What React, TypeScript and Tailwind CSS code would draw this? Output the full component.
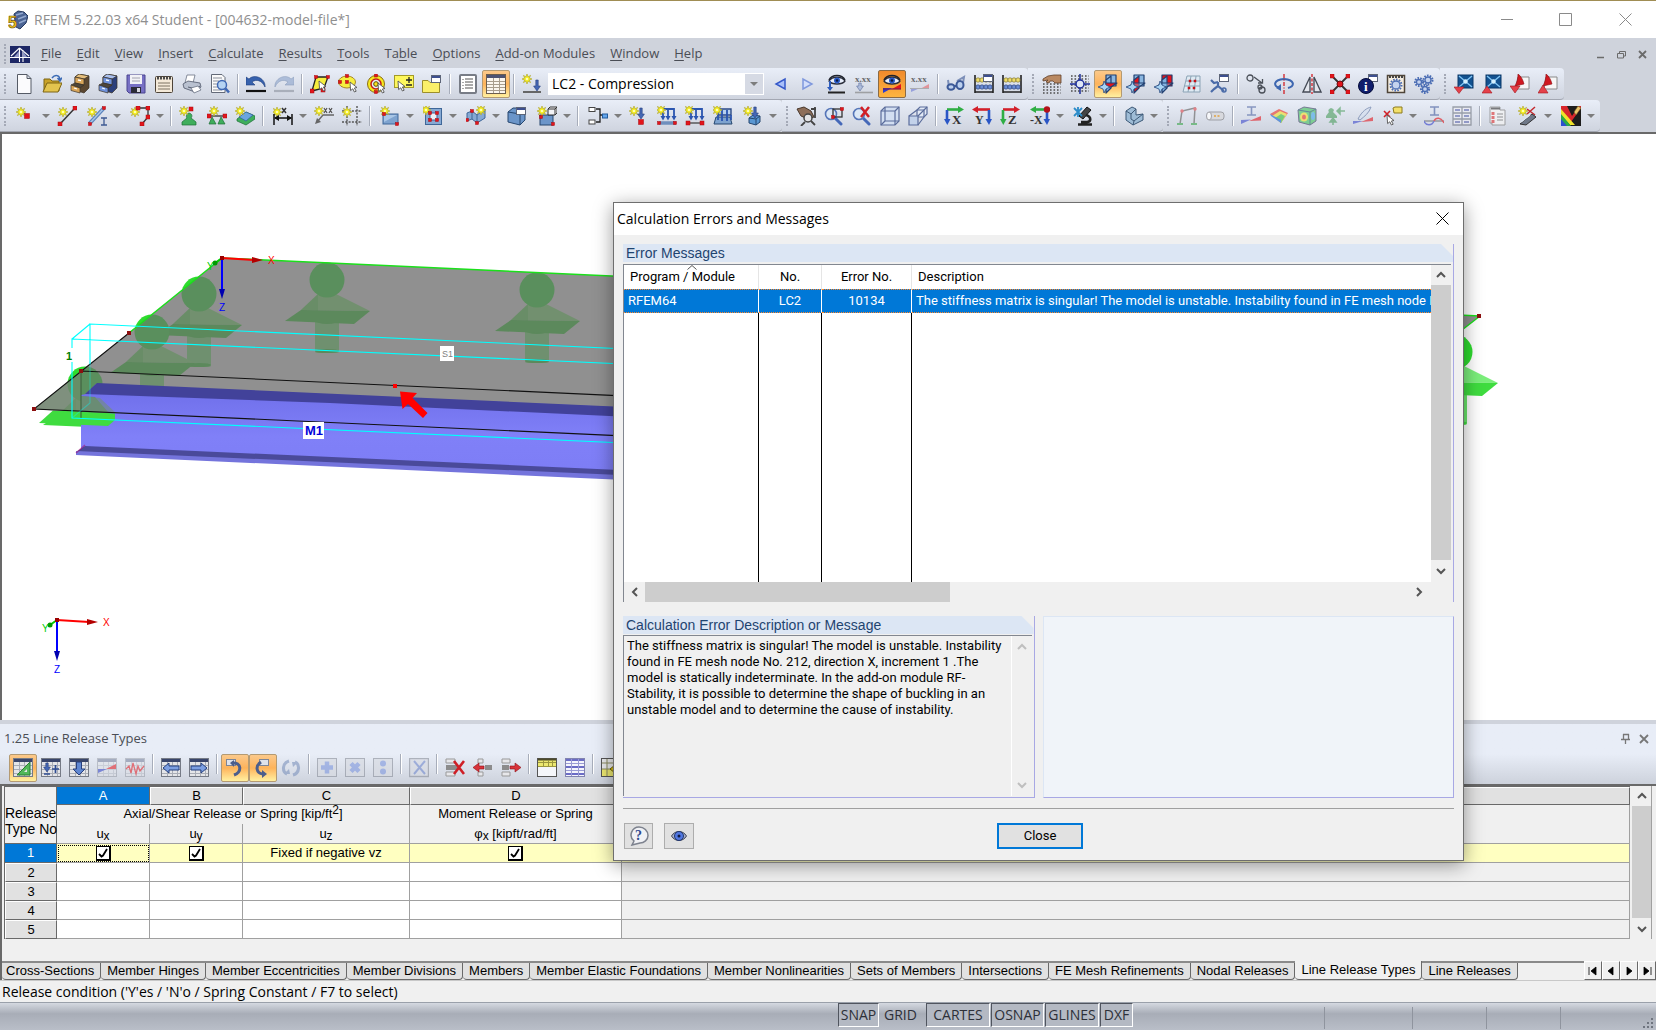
import React from "react";

type Kids = { children?: React.ReactNode };
type Pt = { x?: number; y?: number };

/* ---------- icon parts ---------- */

const Ico = ({ children, size = 20 }: Kids & { size?: number }) => (
  <svg width={size} height={size} viewBox="0 0 20 20" fill="none" aria-hidden="true" className="block shrink-0">
    {children}
  </svg>
);

const Star = ({ x = 5, y = 5 }: Pt) => (
  <g transform={`translate(${x} ${y})`}>
    <path
      d="M0-5 1.1-2.2 3.6-3.6 2.3-1 5 0 2.3 1 3.6 3.6 1.1 2.2 0 5-1.1 2.2-3.6 3.6-2.3 1-5 0-2.3-1-3.6-3.6-1.1-2.2Z"
      fill="#f4ec1c"
      stroke="#b3ab3a"
      strokeWidth=".7"
    />
    <circle r="1.3" fill="#ffffb0" />
  </g>
);
const Dot = ({ x = 0, y = 0, s = 4 }: Pt & { s?: number }) => (
  <rect x={x - s / 2} y={y - s / 2} width={s} height={s} fill="#e3141b" stroke="#a50d12" strokeWidth=".5" />
);
const Cursor = ({ x = 0, y = 0 }: Pt) => (
  <path transform={`translate(${x} ${y})`} d="M0 0 7 5.5 4.4 6 6.2 9.2 4.4 10 2.8 6.8 .6 8.6Z" fill="#fff" stroke="#555" strokeWidth=".9" />
);
const Win = ({ x = 0, y = 0 }: Pt) => (
  <g transform={`translate(${x} ${y})`}>
    <rect x=".5" y=".5" width="9" height="7" fill="#fff" stroke="#5d6578" />
    <rect x="1" y="1" width="8" height="2" fill="#3d4f8f" />
  </g>
);
const DownArrow = ({ x = 0, y = 0, h = 12, c = "#4467b5" }: Pt & { h?: number; c?: string }) => (
  <path transform={`translate(${x} ${y})`} d={`M-1.2 0H1.2V${h - 5}H3.4L0 ${h}-3.4 ${h - 5}H-1.2Z`} fill={c} stroke="#28407e" strokeWidth=".6" />
);
const Grid = ({ faded = false }: { faded?: boolean }) => (
  <g opacity={faded ? 0.55 : 1}>
    <rect x=".5" y=".5" width="19" height="18" fill="#e4e5e8" stroke="#767b86" />
    <path d="M1 7.500H19M1 11.500H19M1 15.500H19M6.500 4V18M11.500 4V18M16.500 4V18" stroke="#a9adb6" />
    <rect x="1" y="1" width="18" height="3" fill="#39456b" />
  </g>
);
const Lens = ({ x = 8, y = 8 }: Pt) => (
  <g transform={`translate(${x} ${y})`}>
    <path d="M4 4 10 10" stroke="#4568b8" strokeWidth="3" strokeLinecap="round" />
    <circle r="5.500" fill="#dbe8f8" fillOpacity=".8" stroke="#5575b8" strokeWidth="1.600" />
  </g>
);
const Eye = ({ x = 10, y = 7 }: Pt) => (
  <g transform={`translate(${x} ${y})`}>
    <path d="M-8 1C-5-4 5-4 8 1 5 5-5 5-8 1Z" fill="#e7eefc" stroke="#2b2f3c" strokeWidth="1.300" />
    <path d="M-8 0C-5-6 5-6 8 0" stroke="#1e222c" strokeWidth="1.500" />
    <circle cy=".5" r="3" fill="#2a5cc9" />
    <circle cy=".5" r="1.300" fill="#0b1a40" />
  </g>
);
const Glyph = ({ x, y, s = 10, c = "#333", b = true, children }: Kids & { x: number; y: number; s?: number; c?: string; b?: boolean }) => (
  <text x={x} y={y} fontSize={s} fill={c} fontWeight={b ? 700 : 400} fontFamily='"Liberation Serif", serif'>
    {children}
  </text>
);
const Gear = ({ x, y, r, c = "#4a6cb3" }: { x: number; y: number; r: number; c?: string }) => (
  <g>
    <circle cx={x} cy={y} r={r} stroke={c} strokeWidth="2" strokeDasharray="1.600 1.200" />
    <circle cx={x} cy={y} r={r - 1.500} fill="#c5d3ee" stroke={c} strokeWidth="1.300" />
  </g>
);
const Block = ({ x = 2, y = 8 }: Pt) => (
  <g transform={`translate(${x} ${y})`}>
    <rect width="15" height="10" fill="#7ea3cf" stroke="#3f6798" />
    <path d="M1 1H14L1 8Z" fill="#a9c6e6" />
  </g>
);
const Abacus = () => (
  <g>
    <path d="M1 1V19M19 1V19M1 18H19" stroke="#222" strokeWidth="1.600" />
    <path d="M1 6H19M1 13H19" stroke="#555" />
    {[4, 8, 12, 16].map((v) => (
      <circle key={v} cx={v} cy="6" r="2.200" fill="#eedc6a" stroke="#6e6424" strokeWidth=".6" />
    ))}
    {[4, 8, 12, 16].map((v) => (
      <circle key={v} cx={v} cy="13" r="2.200" fill="#6a8cd4" stroke="#22386e" strokeWidth=".6" />
    ))}
  </g>
);
const DotGrid = ({ rows = [2, 5, 8, 11, 14, 17] }: { rows?: number[] }) => (
  <g stroke="#4e4e4e" strokeWidth="1.600" strokeDasharray="1.600 1.900">
    {rows.map((v) => (
      <path key={v} d={`M1 ${v}H19`} />
    ))}
  </g>
);
const Planes = ({ kind }: { kind: "flat" | "tall" | "face" }) => (
  <g strokeWidth="1.200" strokeLinejoin="round">
    <path d="M8 1H18V12H8Z" fill={kind === "face" ? "#e3141b" : "#8ab6e0"} stroke="#1f3f70" />
    <path d="M8 6 13 2V14L8 19Z" fill={kind === "tall" ? "#e3141b" : "#7fb0df"} stroke="#223f70" />
    <path d="M2 13 8 9H19L13 13Z" fill={kind === "flat" ? "#e3141b" : "#8fc0ea"} fillOpacity={kind === "flat" ? 1 : 0.4} stroke="#223f70" />
    <path d="M0 13 5 11 6 7 8 11 12 13 8 15 6 19 5 15Z" fill="#a8d4f4" stroke="#284a80" strokeWidth=".8" />
  </g>
);
const Loads = () => (
  <g>
    <path d="M6 12V3H11V12M11 3H17V12" stroke="#2b55b0" strokeWidth="1.800" />
    <path d="M3.500 10H8.500L6 14.500ZM8.500 10H13.500L11 14.500ZM14.500 10H19.500L17 14.500Z" fill="#2b55b0" />
  </g>
);
const Axes = ({ h, v, left, t }: { h: string; v: string; left?: boolean; t: string }) => (
  <g>
    {left ? (
      <>
        <path d="M18 3.500H5" stroke={h} strokeWidth="2.600" />
        <path d="M6 0V7L0 3.500Z" fill={h} />
        <path d="M17 4V14" stroke={v} strokeWidth="2.600" />
        <path d="M13.500 13H20L17 19Z" fill={v} />
        <Glyph x={t.length > 1 ? 0 : 3} y={18} s={12}>{t}</Glyph>
      </>
    ) : (
      <>
        <path d="M3 3.500H14" stroke={h} strokeWidth="2.600" />
        <path d="M14 0V7L20 3.500Z" fill={h} />
        <path d="M3 4V14" stroke={v} strokeWidth="2.600" />
        <path d="M0 13H6.500L3.300 19Z" fill={v} />
        <Glyph x={8} y={18} s={13}>{t}</Glyph>
      </>
    )}
  </g>
);
const Prism = ({ up }: { up?: boolean }) => (
  <g>
    <rect x="4" y="1" width="15" height="13" fill="#12518f" stroke="#0b3868" />
    <path d="M11.500 7.500 5 2M11.500 7.500 18 2M11.500 7.500 5 13M11.500 7.500 18 13" stroke="#7fc4f4" strokeWidth="1.400" />
    <circle cx="11.500" cy="7.500" r="2.200" fill="#d4f0ff" />
    <path d={up ? "M0 19H10L5 12Z" : "M0 13H10L5 19.500Z"} fill="#e4414a" stroke="#a4151d" strokeWidth=".6" />
  </g>
);
const Pdf = ({ up }: { up?: boolean }) => (
  <g>
    <path d="M8 3H19V15H6Z" fill="#f6f6f6" stroke="#8a8a8a" />
    <path d="M8 0C11 2 13 6 14 10L5 12C7 8 8 4 8 0Z" fill="#d01820" stroke="#8b0d13" strokeWidth=".6" />
    <path d={up ? "M0 19H10L5 11Z" : "M0 12H10L5 19Z"} fill="#e4414a" stroke="#a4151d" strokeWidth=".6" />
  </g>
);
const Drawer = ({ a, b, c }: { a: string; b: string; c: string }) => (
  <g stroke="#3b3226" strokeWidth=".7" strokeLinejoin="round">
    <path d="M5 3 9 0 19 2V14L14 19 5 16Z" fill={c} />
    <path d="M5 3 14 5 19 2 9 0Z" fill={a} />
    <path d="M5 3 14 5V11L5 9Z" fill={b} />
    <path d="M1 11 5 9 14 11 10 14Z" fill="#4e463a" />
    <path d="M1 11 10 14V19L1 16.500Z" fill={b} />
    <path d="M4 14 7 15M8 6 11 6.700" stroke="#fff" strokeWidth="1.300" />
  </g>
);

/* ---------- icon set ---------- */

const icons: Record<string, React.ReactNode> = {
  new: <path d="M3.500.5H13L17 4.500V19.500H3.500ZM13 .5V4.500H17" fill="#fbfbfd" stroke="#555b66" />,
  open: (
    <g>
      <path d="M2 5H8L10 7H17V17H2Z" fill="#c9a227" stroke="#7d6415" />
      <path d="M1 18 5 9H20L16 18Z" fill="#e3c44e" stroke="#7d6415" />
      <path d="M10 4C13 0 18 1 18 6M15.500 4 18 7 20 3.500" stroke="#3b6bb5" strokeWidth="1.500" />
    </g>
  ),
  drawerTan: <Drawer a="#e5bf7e" b="#d8a55a" c="#5a4630" />,
  drawerBlue: <Drawer a="#a9c0ef" b="#6f92dc" c="#2a3f7c" />,
  save: (
    <g>
      <path d="M1 1H19V19H3L1 17Z" fill="#7770c4" stroke="#4b458f" />
      <rect x="4" y="1" width="12" height="9" fill="#f1f1f6" />
      <path d="M6 4H14M6 7H14" stroke="#a2a2b0" />
      <rect x="5" y="13" width="10" height="6" fill="#2b2b38" />
      <rect x="11" y="14" width="3" height="4" fill="#d8d8e0" />
    </g>
  ),
  notes: (
    <g>
      <rect x="1.500" y="2.500" width="17" height="16" rx="1" fill="#f4e9d8" stroke="#4e4438" />
      <path d="M3 4H17" stroke="#4a4a4a" strokeWidth="3" strokeDasharray="2 1" />
      <path d="M4 9H16M4 12H16M4 15H16" stroke="#7d7263" />
    </g>
  ),
  print: (
    <g strokeWidth=".8">
      <path d="M3 9 5 1H13L11 9Z" fill="#fff" stroke="#6a7284" />
      <path d="M1 10 6 7 18 9 19 13 13 18 2 14Z" fill="#b9c1d0" stroke="#4f5769" />
      <path d="M6 13 14 15 18 12" stroke="#3f4657" />
      <path d="M9 14 16 12 19 16 12 19Z" fill="#fff" stroke="#6a7284" />
    </g>
  ),
  preview: (
    <g>
      <path d="M1.500.5H12L15 3.500V18.500H1.500Z" fill="#fafafa" stroke="#636a78" />
      <path d="M3 4H12M3 7H9M3 10H8M3 13H8M3 16H12" stroke="#8a8f9b" />
      <circle cx="12" cy="11" r="4.500" fill="#b6d4f3" stroke="#3f68b4" strokeWidth="1.500" />
      <path d="M15.500 14.500 19 18.500" stroke="#3f68b4" strokeWidth="2.500" />
    </g>
  ),
  undo: (
    <g>
      <path d="M0 3V11H9L6 8C10 5 16 6 19 13 20 5 9-1 3 5Z" fill="#3661ad" stroke="#1e3e7c" strokeWidth=".6" />
      <path d="M0 17H20" stroke="#111" strokeWidth="2.200" />
    </g>
  ),
  redo: (
    <g opacity=".6">
      <path d="M20 3V11H11L14 8C10 5 4 6 1 13 0 5 11-1 17 5Z" fill="#8ba3cb" stroke="#5c759f" strokeWidth=".6" />
      <path d="M0 17H20" stroke="#8c929e" strokeWidth="2.200" />
    </g>
  ),
  selPoly: (
    <g>
      <path d="M2 17 6 3H18L14 14Z" fill="#f6ef3e" stroke="#222" strokeWidth="1.300" />
      <Dot x={2} y={17} /><Dot x={6} y={3} s={3} /><Dot x={18} y={3} s={3} /><Dot x={13} y={16} />
      <Cursor x={9} y={7} />
    </g>
  ),
  selEllipse: (
    <g>
      <ellipse cx="9" cy="8" rx="8.500" ry="6" fill="#f6ef3e" stroke="#a8862a" />
      <Dot x={9} y={8} s={3} /><Dot x={2} y={8} s={3} /><Dot x={9} y={2} s={3} />
      <Cursor x={12} y={8} />
    </g>
  ),
  selRing: (
    <g>
      <circle cx="10" cy="10" r="8.500" fill="#f6e81e" stroke="#8a6d15" />
      <circle cx="10" cy="10" r="5" fill="#e9edf5" stroke="#c51a1a" strokeWidth="1.500" />
      <circle cx="10" cy="10" r="2.300" fill="#f6e81e" stroke="#5a4a10" />
      <Dot x={10} y={1.500} s={3} /><Dot x={10} y={18} s={3} />
      <Cursor x={12} y={9} />
    </g>
  ),
  selPlus: (
    <g>
      <rect x=".5" y="1.500" width="19" height="12" fill="#fdf75c" stroke="#a39a28" />
      <path d="M12 6H18M15 3V9M12 11H18" stroke="#222" strokeWidth="1.300" />
      <Cursor x={4} y={7} />
    </g>
  ),
  folderWin: (
    <g>
      <path d="M.5 6.500H6L8 8.500H17.500V18.500H.5Z" fill="#fbf06a" stroke="#9c8f2b" />
      <Win x={9} y={1} />
    </g>
  ),
  list: (
    <g>
      <rect x="2" y="1" width="16" height="18" rx="1" fill="#fff" stroke="#777c86" strokeWidth="2" />
      <path d="M7 5H15M7 8H15M7 11H15M7 14H15" stroke="#555" />
      <path d="M5 5V15" stroke="#555" strokeDasharray="1 2" />
    </g>
  ),
  table: (
    <g>
      <rect x=".5" y=".5" width="19" height="19" fill="#fbf6ee" stroke="#6b5d4d" />
      <rect x="1" y="1" width="18" height="3" fill="#4d5373" />
      <path d="M1 7.500H19M1 10.500H19M1 13.500H19M1 16.500H19M7.500 4V19M13.500 4V19" stroke="#a89d8d" />
    </g>
  ),
  loadNew: (
    <g>
      <Star x={5} y={5} />
      <DownArrow x={15} y={6} h={11} />
      <path d="M1 18H19" stroke="#666" strokeWidth="2" />
    </g>
  ),
  left: <path d="M15 5V15L6 10Z" fill="#a9c0fa" stroke="#3558c9" strokeWidth="1.500" />,
  right: <path d="M5 5V15L14 10Z" fill="#d3defa" stroke="#7f98dd" strokeWidth="1.500" />,
  eyeLoad: (
    <g>
      <Eye x={11} y={6} />
      <path d="M4 7V16" stroke="#2f5dbd" strokeWidth="2" />
      <path d="M1 13H7L4 17Z" fill="#2f5dbd" />
      <path d="M2 18.500H19" stroke="#222" strokeWidth="2" />
    </g>
  ),
  xxLoad: (
    <g opacity=".7">
      <Glyph x={1} y={8} s={9}>x.xx</Glyph>
      <DownArrow x={6} y={9} h={8} c="#9db0d8" />
      <path d="M1 18.500H19" stroke="#888" strokeWidth="1.600" />
    </g>
  ),
  eyeRes: (
    <g>
      <Eye x={10} y={6} />
      <path d="M1 14H10L1 19Z" fill="#2a3fd0" />
      <path d="M19 10V15H10Z" fill="#e3141b" />
      <path d="M1 15H19" stroke="#7a1b4e" strokeWidth="1.200" />
    </g>
  ),
  xxRes: (
    <g opacity=".7">
      <Glyph x={1} y={8} s={9}>x.xx</Glyph>
      <path d="M1 14H10L1 18Z" fill="#7d88d8" />
      <path d="M19 10V15H10Z" fill="#e4777b" />
      <path d="M0 14.500H19" stroke="#999" />
    </g>
  ),
  glasses: (
    <g stroke="#3d5a98" strokeWidth="2">
      <path d="M2 6 3 13M11 7 18 3 17 9" stroke="#7c8fb8" />
      <ellipse cx="5" cy="13" rx="3.500" ry="2.800" fill="#bcd0ee" />
      <ellipse cx="14" cy="11" rx="3.500" ry="4" fill="#bcd0ee" />
      <path d="M8 12H11" />
    </g>
  ),
  abacusWin: <g><Abacus /><Win x={9} y={0} /></g>,
  abacus: <Abacus />,
  handGrid: (
    <g>
      <DotGrid rows={[10, 13, 16, 19]} />
      <path d="M1 5 6 2 12 1 19 1V9H13L11 7 8 7 7 9 4 8 6 6 1 7Z" fill="#b98963" stroke="#5f3f28" strokeWidth=".8" />
    </g>
  ),
  gridCenter: (
    <g>
      <DotGrid />
      <circle cx="10" cy="10" r="4" fill="#dfe7f6" stroke="#1e2f9a" strokeWidth="1.500" />
      <path d="M10 0V6M10 14V20M0 10H6M14 10H20" stroke="#1e2f9a" strokeWidth="1.500" />
    </g>
  ),
  plane1: <Planes kind="flat" />,
  plane2: <Planes kind="tall" />,
  plane3: <Planes kind="face" />,
  gridPlane: (
    <g>
      <path d="M5 2H18V18H1Z" fill="#dfeaf3" stroke="#8ba3b5" />
      <path d="M4 7H18M2 12H18M9 2 6 18M14 2 12 18" stroke="#8ba3b5" />
      <Dot x={8} y={7} s={2} /><Dot x={13} y={7} s={2} /><Dot x={7} y={14} s={2} /><Dot x={12} y={14} s={2} />
    </g>
  ),
  wrench: (
    <g>
      <path d="M1 6 4 9 8 8M8 8 8 12 14 17M8 12 4 15 1 18" stroke="#4a6ba8" strokeWidth="2.200" />
      <circle cx="14" cy="16" r="2" stroke="#4a6ba8" strokeWidth="1.500" />
      <Win x={9} y={0} />
    </g>
  ),
  copyO: (
    <g stroke="#4a4f58" strokeWidth="1.300">
      <circle cx="4" cy="4" r="3" /><circle cx="14" cy="13" r="2" /><circle cx="16" cy="16" r="3" />
      <path d="M8 3 16 9M12 9H16.500V5" />
    </g>
  ),
  rotate: (
    <g>
      <path d="M6 14C-1 12-1 6 10 5 21 6 21 12 14 14" stroke="#3d66b0" strokeWidth="2" />
      <path d="M7 10V17L2 14Z" fill="#3d66b0" />
      <path d="M10 0V20" stroke="#d21f26" strokeWidth="1.300" strokeDasharray="4 1.500 1 1.500" />
    </g>
  ),
  mirror: (
    <g>
      <path d="M8 3V18H1ZM12 3V18H19Z" fill="#e4e7ee" stroke="#444a55" strokeWidth="1.300" />
      <path d="M10 0V20" stroke="#d21f26" strokeWidth="1.300" strokeDasharray="3 1.500" />
    </g>
  ),
  explode: (
    <g>
      <path d="M2 2 18 18M18 2 2 18" stroke="#333" strokeWidth="1.800" />
      <Dot x={2} y={2} /><Dot x={18} y={2} /><Dot x={2} y={18} /><Dot x={18} y={18} />
      <circle cx="10" cy="10" r="3" fill="#e3141b" stroke="#6c0b0e" />
    </g>
  ),
  info: (
    <g>
      <Win x={10} y={0} />
      <circle cx="8" cy="12" r="7.500" fill="#101d6c" stroke="#050c38" />
      <Glyph x={6} y={17} s={13} c="#fff">i</Glyph>
    </g>
  ),
  gearDoc: (
    <g>
      <rect x="1.500" y="1.500" width="17" height="17" fill="#f4ecdf" stroke="#4e4438" strokeWidth="1.500" />
      <path d="M3 3H17" stroke="#444" strokeWidth="2" strokeDasharray="2 1" />
      <Gear x={10} y={11} r={5.500} />
    </g>
  ),
  gears: <g><Gear x={5} y={8} r={4} /><Gear x={14} y={6} r={4.500} /><Gear x={11} y={15} r={4} /></g>,
  img1: <Prism />,
  img2: <Prism up />,
  pdf1: <Pdf />,
  pdf2: <Pdf up />,

  node: <g><Star x={5} y={6} /><Dot x={11} y={10} s={5} /></g>,
  line: <g><path d="M3 18 18 2" stroke="#333" strokeWidth="1.500" /><Star x={6} y={6} /><Dot x={3} y={18} /><Dot x={18} y={2} /></g>,
  member: (
    <g>
      <path d="M3 17 17 2" stroke="#5b84bd" strokeWidth="4" /><path d="M3 17 17 2" stroke="#a7c5e8" strokeWidth="1.500" />
      <Star x={5} y={6} /><Dot x={3} y={18} s={3} /><Dot x={17} y={2} s={3} />
      <path d="M14 12H20M14 19H20M17 12V19" stroke="#3e5a93" strokeWidth="1.300" />
    </g>
  ),
  polyline: (
    <g>
      <path d="M6 2H18V11L12 18" stroke="#333" strokeWidth="1.300" />
      <Star x={5} y={6} /><Dot x={8} y={2} /><Dot x={18} y={2} /><Dot x={18} y={11} /><Dot x={12} y={18} />
    </g>
  ),
  support: (
    <g>
      <path d="M10 7C14 8 13 11 12 12L17 16V19H3V16L8 12C7 11 7 8 10 7Z" fill="#3fae5c" stroke="#1d6d35" strokeWidth=".7" />
      <Star x={5} y={5} /><Dot x={12} y={3} />
    </g>
  ),
  lineSup: (
    <g>
      <path d="M2 10H18" stroke="#333" strokeWidth="1.300" />
      <path d="M5 11 9 18H2ZM14 11 18 18H11Z" fill="#3fae5c" stroke="#1d6d35" strokeWidth=".7" />
      <Star x={7} y={5} /><Dot x={2} y={10} /><Dot x={18} y={10} />
    </g>
  ),
  surfSup: (
    <g>
      <path d="M2 13 11 6 20 10V13L11 19 2 15Z" fill="#3fae5c" stroke="#1d6d35" strokeWidth=".7" />
      <path d="M4 11 11 6 18 9 11 15Z" fill="#6aa5df" stroke="#2d5f97" strokeWidth=".7" /><Star x={5} y={5} />
    </g>
  ),
  dim: (
    <g>
      <Star x={4} y={6} /><path d="M9 2 13 7M13 2 9 7" stroke="#333" strokeWidth="1.500" />
      <path d="M1 8V19M19 8V19M2 12H18" stroke="#111" strokeWidth="1.500" /><path d="M6 9V15L1 12ZM14 9V15L19 12Z" fill="#111" />
    </g>
  ),
  xxNote: (
    <g><path d="M10 2 13 7M13 2 10 7M15 2 18 7M18 2 15 7" stroke="#555" strokeWidth="1.200" /><path d="M9 9H20M9 9 3 16" stroke="#666" strokeWidth="1.300" /><path d="M1 18 3 12 7 16Z" fill="#666" /><Star x={5} y={5} /></g>
  ),
  gridLines: (
    <g><path d="M5 0V20M15 0V20M0 5H20M0 16H20" stroke="#555" strokeWidth="1.400" strokeDasharray="2 1.300" /><Star x={5} y={6} /></g>
  ),
  rect: <g><Block x={3} y={8} /><Star x={5} y={5} /><Dot x={4} y={8} s={3} /><Dot x={17} y={18} s={3} /></g>,
  opening: (
    <g>
      <rect x="2.500" y="2.500" width="16" height="16" fill="#86a9d4" stroke="#3f6798" />
      <rect x="7" y="7" width="7" height="7" fill="#eef1f7" stroke="#3f6798" />
      <Star x={3} y={4} /><Dot x={7} y={7} s={3} /><Dot x={14} y={7} s={3} /><Dot x={7} y={14} s={3} /><Dot x={14} y={14} s={3} />
    </g>
  ),
  surfFold: (
    <g>
      <path d="M1 7 6 5 11 9 19 3V12L11 17 6 13 1 15Z" fill="#86a9d4" stroke="#3f6798" /><path d="M6 5V13M11 9V17" stroke="#3f6798" />
      <Star x={15} y={4} /><Dot x={1} y={14} s={3} /><Dot x={11} y={17} s={3} /><Dot x={6} y={5} s={3} />
    </g>
  ),
  solid: <g><path d="M1 6 6 2H18V14L13 19 1 16Z" fill="#6b95c9" stroke="#26476f" /><path d="M1 6 13 8V19M13 8 18 3" stroke="#26476f" /><Win x={9} y={1} /></g>,
  solidSet: (
    <g><rect x="3" y="9" width="13" height="10" fill="#6b95c9" stroke="#26476f" /><path d="M11 3 13 1H20V7L18 9H11ZM11 3H18V9M18 3 20 1" fill="#f4f4f7" stroke="#333" /><Star x={5} y={5} /><Dot x={4} y={11} s={3} /><Dot x={16} y={18} s={3} /></g>
  ),
  flow: (
    <g><path d="M8 3H12V16H8M12 9H15" stroke="#222" strokeWidth="1.300" /><rect x="1" y="1.500" width="6" height="4" fill="#fff" stroke="#444" /><rect x="1" y="14" width="6" height="4" fill="#fff" stroke="#444" /><rect x="14.500" y="8" width="5" height="4" fill="#64a5ea" stroke="#205a9c" /></g>
  ),
  loadNode: <g><Star x={5} y={5} /><DownArrow x={12} y={2} h={11} /><Dot x={12} y={16} s={5} /></g>,
  loadMem: <g><Loads /><Star x={4} y={4} /><path d="M2 17H19" stroke="#6f8fbd" strokeWidth="3.500" /><Dot x={2} y={17} s={3} /><Dot x={18} y={17} s={3} /></g>,
  loadLine: <g><Loads /><Star x={4} y={4} /><path d="M2 17H19" stroke="#444" strokeWidth="1.300" /><Dot x={3} y={17} /><Dot x={17} y={17} /></g>,
  loadSurf: <g><path d="M3 11H17L19 18H1Z" fill="#7ea3cf" stroke="#26476f" /><path d="M5 3H18V9H5Z" fill="#b8d0ee" stroke="#2b4a86" strokeWidth="1.400" /><path d="M5 9V14M9 4V15M14 4V15M18 9V14" stroke="#2b55b0" strokeWidth="1.800" /><Star x={4} y={4} /></g>,
  loadSolid: <g><path d="M6 12 10 9 17 10V16L13 19 6 17Z" fill="#5a97d2" stroke="#26476f" /><path d="M6 12 13 13V19M13 13 17 10" stroke="#26476f" /><Star x={5} y={5} /><DownArrow x={12} y={1} h={11} /></g>,
  handZoom: (
    <g><path d="M1 3 8 1 15 5 18 11 12 13 5 10Z" fill="#8d6e59" stroke="#49382c" /><circle cx="12" cy="12" r="4" fill="#e3e3e6" stroke="#444" strokeWidth="1.500" /><path d="M9 16 5 20M15 15 19 19M19 1V12M15 3H20" stroke="#444" strokeWidth="1.800" /></g>
  ),
  zoomWin: <g><Lens x={7} y={8} /><rect x="9" y="3" width="9" height="8" stroke="#333" strokeWidth="1.300" /><Dot x={9} y={11} s={3} /><Dot x={18} y={3} s={3} /></g>,
  zoomX: <g><Lens x={7} y={8} /><path d="M9 1 17 11M17 1 9 11" stroke="#d21f26" strokeWidth="2.500" /></g>,
  cube: <g stroke="#5a6c9b" strokeWidth="1.200"><path d="M1 5 5 1H19V15L15 19H1Z" fill="#d2def1" /><path d="M1 5H15V19M15 5 19 1M5 1V15H19M5 15 1 19" /></g>,
  cubes: <g stroke="#5a6c9b" strokeWidth="1.200"><path d="M9 4 12 1H19V8L16 11H9Z" fill="#e3eaf6" /><path d="M9 4H16V11M16 4 19 1" /><path d="M1 10H10V19H1Z" fill="#c3d2ea" /><path d="M1 10 9 4M10 10 16 4M10 19 16 11" /></g>,
  axX: <Axes h="#2fae44" v="#2a56c6" t="X" />,
  axY: <Axes h="#d3202a" v="#2a56c6" left t="Y" />,
  axZ: <Axes h="#d3202a" v="#2fae44" t="Z" />,
  axNX: <g><Axes h="#2fae44" v="#2a56c6" left t="-X" /><circle cx="17" cy="3.500" r="3.200" fill="#b3121a" /></g>,
  scope: <g><path d="M6 10 14 1 18 4 10 13Z" fill="#444" stroke="#111" /><path d="M13 9C19 11 18 16 14 16H8M5 18.500H19" stroke="#222" strokeWidth="2.600" /><path d="M1 2 9 10M9 2 1 10M5 1V11" stroke="#2c8cc9" strokeWidth="1.800" /></g>,
  solidView: <g strokeLinejoin="round" stroke="#3c5876"><path d="M2 5 8 1 12 3V9L19 8V14L9 19 2 14Z" fill="#9ebcd6" /><path d="M2 5 7 8V13L10 15 19 8M10 15 9 19M7 8 12 3" /></g>,
  frame: <g opacity=".75"><path d="M3 18 5 5 18 2 17 18" stroke="#777" strokeWidth="1.500" /><path d="M0 18H6M14 18H20" stroke="#58b068" strokeWidth="2" /><circle cx="5" cy="5" r="1.700" fill="#e16066" /><circle cx="18" cy="3" r="1.700" fill="#e16066" /></g>,
  pipe: <g opacity=".75"><rect x="2" y="6" width="17" height="8" rx="3" fill="#d7d7da" stroke="#8b8b90" /><ellipse cx="4" cy="10" rx="2.500" ry="4" fill="#fff" stroke="#8b8b90" /><path d="M9 10H16" stroke="#e1a03d" strokeWidth="2" strokeDasharray="2 1.500" /></g>,
  memRes: <g opacity=".7"><path d="M6 1H15M6 9H15M10.500 1V9" stroke="#6276ad" strokeWidth="1.600" /><path d="M0 18V14L10 13.500Z" fill="#5560d0" /><path d="M20 10V14.500L8 15Z" fill="#e2343b" /></g>,
  surfRes: <g opacity=".75"><path d="M1 8 10 3 19 7 12 17Z" fill="#e9534a" /><path d="M3 10 11 5 18 8 12 17Z" fill="#f1e04b" /><path d="M6 12 12 8 16 10 12 17Z" fill="#58c75c" /><path d="M1 8 2 10 12 17 12 14Z" fill="#3a7ae0" /></g>,
  solidRes: <g opacity=".75"><path d="M1 4 7 1 19 3V15L13 19 2 16Z" fill="#5fc877" stroke="#557" /><path d="M13 6V19M1 4 13 6 19 3" stroke="#3b6a80" /><ellipse cx="7" cy="11" rx="4" ry="4.500" fill="#f1e04b" /><ellipse cx="7" cy="11" rx="2" ry="2.500" fill="#e9534a" /><ellipse cx="16" cy="10" rx="2" ry="4" fill="#5fb0ea" /></g>,
  supRes: <g opacity=".6"><path d="M6 2C10 3 9 5 8 6L12 10V12H1V10L4 6C3 5 3 3 6 2Z" fill="#4a9d5c" /><path d="M20 5H14M12 5 15 2V8ZM8 19V15M8 12 5 16H11Z" fill="#4a9d5c" stroke="#4a9d5c" strokeWidth="1.500" /></g>,
  knife: <g opacity=".7"><path d="M5 13C9 5 14 2 18 1 16 7 12 10 7 14Z" fill="#d6e0ef" stroke="#6a7ea8" /><path d="M0 18V15L10 15Z" fill="#5560d0" /><path d="M20 11V15L8 16Z" fill="#e2343b" /></g>,
  pickX: <g><path d="M1 5 7 11M7 5 1 11" stroke="#d21f26" strokeWidth="1.600" /><path d="M10 2 12 1H19V7H11Z" fill="#f3e06a" stroke="#8b7a1e" /><Cursor x={4} y={9} /></g>,
  curve: <g opacity=".75"><path d="M6 1H15M6 9H15M10.500 1V9" stroke="#6276ad" strokeWidth="1.600" /><path d="M0 15H20" stroke="#555" /><path d="M0 15C2 20 8 20 10 15" stroke="#5560d0" strokeWidth="1.500" /><path d="M10 15C12 11 17 11 20 17" stroke="#e2343b" strokeWidth="1.500" /></g>,
  tables: <g opacity=".7"><path d="M1 1H19V19H1ZM10 1V19M1 7H19M1 13H19" stroke="#7a808c" strokeWidth="1.300" fill="#ececf2" /><path d="M3 4H8M12 4H17M3 10H8M12 10H17M3 16H8M12 16H17" stroke="#4e5aa8" strokeWidth="1.300" /></g>,
  report: <g opacity=".75"><path d="M2 1H12V4H17V19H4V17H2Z" fill="#f4f4f4" stroke="#888" /><path d="M3 2.500H12" stroke="#555" strokeWidth="2" /><path d="M5 6V17" stroke="#e05353" strokeWidth="3" strokeDasharray="3 1" /><path d="M9 8H15M9 11H15M9 14H15" stroke="#777" /></g>,
  tools: <g><Star x={5} y={5} /><path d="M9 3 17 9M17 1 9 8" stroke="#c42a2f" strokeWidth="1.500" /><path d="M2 18 14 8 18 11 8 19Z" fill="#6f7888" stroke="#333" /><path d="M3 16 12 9" stroke="#dce6f4" strokeWidth="1.500" /></g>,
  rainbow: (
    <g>
      <rect width="20" height="20" fill="#1c1c1c" />
      <path d="M0 0H6L11 10 18 0H20V2L10 16 0 4Z" fill="#d8262c" />
      <path d="M0 3 14 19H9L0 9Z" fill="#f0e22a" />
      <path d="M0 8 10 20H5L0 14Z" fill="#2bab46" />
      <path d="M0 13 6 20H0Z" fill="#2c4fd0" />
      <path d="M13 6 17 0 20 2 15 9Z" fill="#e9c36b" stroke="#6d531a" strokeWidth=".6" />
    </g>
  ),

  tri: <g><Grid /><path d="M17 4V17H4Z" fill="#53b85a" stroke="#2a7f32" /><path d="M14 11V14H11Z" fill="#e4e5e8" /></g>,
  addRow: <g><Grid /><DownArrow x={6} y={5} h={9} /><path d="M3 16H9M11 11H18M14.500 7V15" stroke="#2e4c92" strokeWidth="1.700" /></g>,
  downRow: <g><Grid /><path d="M7.500 4H12.500V11H16L10 17 4 11H7.500Z" fill="#5f87d2" stroke="#28407e" /></g>,
  lineRes: <g opacity=".65"><Grid faded /><path d="M1 15V11L10 11Z" fill="#4a58cc" /><path d="M19 6V11L9 11Z" fill="#e2343b" /></g>,
  wave: <g opacity=".65"><Grid faded /><path d="M1 11 4 8 6 15 8 5 11 16 13 8 15 13 19 8" stroke="#e2343b" strokeWidth="1.300" /></g>,
  gLeft: <g><Grid /><path d="M2 10 8 5V8H18V12H8V15Z" fill="#7c9fe2" stroke="#24407f" /></g>,
  gRight: <g><Grid /><path d="M18 10 12 5V8H2V12H12V15Z" fill="#7c9fe2" stroke="#24407f" /></g>,
  sync1: <g><rect x="1.500" y="1.500" width="9" height="6" fill="#dfe2ea" stroke="#7e8596" /><path d="M7 5C17 4 17 14 9 17" stroke="#4c5e8c" strokeWidth="3" /><path d="M5 5 9 2V9Z" fill="#4c5e8c" /></g>,
  sync2: <g><rect x="6.500" y="1.500" width="9" height="6" fill="#dfe2ea" stroke="#7e8596" /><path d="M8 4C2 8 3 15 10 16" stroke="#4c5e8c" strokeWidth="3" /><path d="M14 16 9 12V20Z" fill="#4c5e8c" /></g>,
  refresh: <g opacity=".6" stroke="#7d93bd" strokeWidth="3"><path d="M8 3C1 5 1 14 6 16M12 17C19 15 19 6 14 4" /><path d="M9 16H3L8 11ZM11 4H17L12 9Z" fill="#7d93bd" stroke="none" /></g>,
  gPlus: <g opacity=".6"><rect x=".5" y=".5" width="19" height="18" fill="#d7dae1" stroke="#898e99" /><path d="M4 9.500H16M10 3.500V15.500" stroke="#7d96dd" strokeWidth="4.500" /></g>,
  gTimes: <g opacity=".6"><rect x=".5" y=".5" width="19" height="18" fill="#d7dae1" stroke="#898e99" /><path d="M6 5.500 14 13.500M14 5.500 6 13.500" stroke="#7d96dd" strokeWidth="4.500" /></g>,
  gDiv: <g opacity=".6"><rect x=".5" y=".5" width="19" height="18" fill="#d7dae1" stroke="#898e99" /><circle cx="10" cy="5.500" r="3" fill="#7d96dd" /><circle cx="10" cy="13.500" r="3" fill="#7d96dd" /></g>,
  gX: <g opacity=".6"><rect x=".5" y=".5" width="19" height="18" fill="#d7dae1" stroke="#898e99" strokeWidth="1.400" /><path d="M5 3 16 16M16 3 5 16" stroke="#7088cc" strokeWidth="2" /></g>,
  rowX: <g><path d="M1 1H10V5H1ZM1 14H10V18H1Z" fill="#e7e7ea" stroke="#999" /><path d="M1 7H13V12H1Z" fill="#8c8c8c" /><path d="M9 3 19 16M19 3 9 16" stroke="#cf1f26" strokeWidth="2.600" /></g>,
  rowIn: <g><path d="M5 1H10V5H5ZM5 14H10V18H5Z" fill="#e7e7ea" stroke="#999" /><path d="M12 7H19V12H12Z" fill="#8c8c8c" /><path d="M0 9.500 6 5V8H11V11H6V14Z" fill="#d8333a" stroke="#8e1217" strokeWidth=".6" /></g>,
  rowOut: <g><path d="M1 1H9V5H1ZM1 14H9V18H1Z" fill="#e7e7ea" stroke="#999" /><path d="M1 7H8V12H1Z" fill="#8c8c8c" /><path d="M20 9.500 14 5V8H9V11H14V14Z" fill="#d8333a" stroke="#8e1217" strokeWidth=".6" /></g>,
  tabY: <g><rect x=".5" y=".5" width="19" height="18" fill="#f4f6fa" stroke="#555" /><rect x="1" y="1" width="18" height="7" fill="#ece870" /><path d="M1 1.500H19" stroke="#4c4a2a" strokeWidth="2" /><path d="M1 8.500H19M1 4.500H19M6.500 2V8M11.500 2V8M15.500 2V8" stroke="#9b973f" /></g>,
  tabB: <g><rect x=".5" y=".5" width="19" height="18" fill="#f4f5fc" stroke="#8284b0" /><path d="M1 2H19M1 9H19M1 16H19" stroke="#6b6dc6" strokeWidth="2.200" /><path d="M1 5.500H19M1 12.500H19M6.500 1V18M13.500 1V18" stroke="#9a9cd4" /></g>,
  tabY2: <g><rect x=".5" y=".5" width="19" height="18" fill="#e9eaec" stroke="#555" /><rect x="1" y="11" width="18" height="7" fill="#ece870" /><path d="M1 5H19M6 1V18M1 11H19" stroke="#8b8b60" /><path d="M9 11 14 7V9H19V13H14V15Z" fill="#d9c012" stroke="#6d5f08" /></g>,
};

/* ---------- tool bars ---------- */

const Grip = () => <span className="mx-1 h-5 w-0.5 shrink-0 border-l-2 border-dotted border-[#a4a9b6]" />;
const Sep = () => (
  <span className="flex w-2 shrink-0 justify-center">
    <span className="h-5 w-0.5 border-r border-white bg-[#a7adba]" />
  </span>
);
const Tool = ({ n, on, hot }: { n: string; on?: boolean; hot?: boolean }) => (
  <button
    type="button"
    aria-label={n}
    aria-pressed={on || hot || undefined}
    className={
      "flex h-7 w-7 shrink-0 items-center justify-center " +
      (hot
        ? "rounded-xs border border-[#8b6b45] bg-linear-to-b from-[#f08a2c] to-[#fdb440]"
        : on
          ? "rounded-xs border border-[#b49a72] bg-linear-to-b from-[#fbc98b] via-[#fdb35a] to-[#fff0a0]"
          : "")
    }
  >
    <Ico>{icons[n]}</Ico>
  </button>
);
const Drop = ({ n }: { n: string }) => (
  <button type="button" aria-label={n} className="flex h-7 w-[43px] shrink-0 items-center gap-1.5 pl-1.5">
    <Ico>{icons[n]}</Ico>
    <span className="border-x-4 border-t-4 border-x-transparent border-t-[#7d7d7d]" />
  </button>
);
const Bar = ({ children }: Kids) => (
  <div className="flex h-8 items-center rounded-r-sm border-b border-[#a3a7b2] bg-linear-to-b from-[#e9eef8] to-[#cfd4df] pt-px pr-0.5">{children}</div>
);
/* "|" separator, "*" pressed, "!" highlighted, "+" with a menu arrow */
const Tools = ({ list }: { list: string }) => (
  <>
    {list.split(" ").map((t, i) => {
      if (t === "|") return <Sep key={i} />;
      if (t.startsWith("*")) return <Tool key={i} n={t.slice(1)} on />;
      if (t.startsWith("!")) return <Tool key={i} n={t.slice(1)} hot />;
      if (t.endsWith("+")) return <Drop key={i} n={t.slice(0, -1)} />;
      return <Tool key={i} n={t} />;
    })}
  </>
);

const menus: [string, string, string][] = [
  ["", "F", "ile"], ["", "E", "dit"], ["", "V", "iew"], ["", "I", "nsert"], ["", "C", "alculate"], ["", "R", "esults"],
  ["", "T", "ools"], ["Ta", "b", "le"], ["", "O", "ptions"], ["", "A", "dd-on Modules"], ["", "W", "indow"], ["", "H", "elp"],
];

const TitleBar = () => (
  <header className="flex h-[38px] shrink-0 items-center border-t border-[#a08d54] bg-white pl-2 text-[#8f8f8f]">
    <Ico>
      <path d="M6 4 10 1 16 2 20 6 18 13 12 19 8 17Z" fill="#4b6494" stroke="#26395f" />
      <path d="M8 5 15 3M10 9 18 6M11 13 18 10" stroke="#93a9d0" strokeWidth="1.500" />
      <text x="0" y="18" fontSize="16" fontWeight="700" fill="#f2c21c" stroke="#5c4a10" strokeWidth=".6" fontFamily='"Liberation Sans", sans-serif'>5</text>
    </Ico>
    <h1 className="ml-1.5 flex-1 text-sm">RFEM 5.22.03 x64 Student - [004632-model-file*]</h1>
    <div className="flex text-[#8a8a8a]">
      <button type="button" aria-label="Minimize" className="flex w-[58px] justify-center"><svg width="13" height="13"><path d="M0 6.500H12" stroke="currentColor" /></svg></button>
      <button type="button" aria-label="Maximize" className="flex w-[58px] justify-center"><svg width="13" height="13"><path d="M.5.5H12.500V12.500H.5Z" stroke="currentColor" fill="none" /></svg></button>
      <button type="button" aria-label="Close window" className="flex w-[62px] justify-center"><svg width="13" height="13"><path d="M.5.5 12.500 12.500M12.500.5.5 12.500" stroke="currentColor" /></svg></button>
    </div>
  </header>
);

const MenuBar = () => (
  <nav className="flex h-[30px] shrink-0 items-center bg-[#cfd3dc] pt-0.5 text-[13px] text-[#4a4d55]">
    <Grip />
    <svg width="20" height="17" className="block" aria-hidden="true">
      <rect width="20" height="17" fill="#1d2765" />
      <path d="M0 11.500H20M9.500 2V16M13 4V16M1 10 9.500 2M9.500 2 19 10" stroke="#fff" strokeWidth="1.100" />
      <path d="M4 11 9 5V11ZM13 11V5L17 11Z" fill="#8f97c4" />
    </svg>
    <ul className="ml-[3px] flex flex-1">
      {menus.map(([a, u, b]) => (
        <li key={a + u + b}>
          <button type="button" className="pr-[7px] pl-2">{a}<span className="underline underline-offset-2">{u}</span>{b}</button>
        </li>
      ))}
    </ul>
    <div className="flex gap-3 pr-[9px] text-[#6b6b6b]">
      <button type="button" aria-label="Minimize document"><svg width="9" height="9"><path d="M1 7.500H8" stroke="currentColor" strokeWidth="1.500" /></svg></button>
      <button type="button" aria-label="Restore document"><svg width="9" height="9"><path d="M2.500 3V1.500H8.500V6H7M.5 3.500H6.500V8H.5Z" fill="none" stroke="currentColor" /></svg></button>
      <button type="button" aria-label="Close document"><svg width="9" height="9"><path d="M1 1 8 8M8 1 1 8" stroke="currentColor" strokeWidth="1.800" /></svg></button>
    </div>
  </nav>
);

const ToolBars = () => (
  <div className="shrink-0 bg-[#cfd3dc]">
    <div className="flex">
      <Bar>
        <Grip />
        <Tools list="new open drawerTan drawerBlue save notes print preview | undo redo | selPoly selEllipse selRing selPlus folderWin | list *table | loadNew" />
        <div className="relative mx-0.5 flex h-[22px] w-[216px] bg-white text-sm text-black">
          <select aria-label="Load case" className="w-full appearance-none bg-transparent pl-1 leading-[22px]">
            <option>LC2 - Compression</option>
          </select>
          <span className="pointer-events-none absolute inset-y-px right-px flex w-[18px] items-center justify-center bg-[#d6dae4]">
            <span className="border-x-4 border-t-4 border-x-transparent border-t-[#7d7d7d]" />
          </span>
        </div>
        <Tools list="left right eyeLoad xxLoad !eyeRes xxRes | glasses abacusWin abacus" />
      </Bar>
      <Bar>
        <Grip />
        <Tools list="handGrid gridCenter *plane1 plane2 plane3 gridPlane wrench | copyO rotate mirror explode info gearDoc gears" />
      </Bar>
      <Bar>
        <Grip />
        <Tools list="img1 img2 pdf1 pdf2" />
      </Bar>
    </div>
    <div className="flex">
      <Bar>
        <Grip />
        <Tools list="node+ line member+ polyline+ | support lineSup surfSup | dim+ xxNote gridLines | rect+ opening+ surfFold+ solid solidSet+ | flow+ loadNode loadMem loadLine loadSurf loadSolid+" />
      </Bar>
      <Bar>
        <Grip />
        <Tools list="handZoom zoomWin zoomX cube cubes | axX axY axZ axNX+ scope+ | solidView+" />
      </Bar>
      <Bar>
        <Grip />
        <Tools list="frame pipe | memRes surfRes solidRes supRes knife pickX+ curve tables | report tools+ rainbow+" />
      </Bar>
    </div>
  </div>
);

/* ---------- model view ---------- */

type Tone = { ball: string; top: string; low: string; stem: string };
const bright: Tone = { ball: "#2fdc2f", top: "#7bee7b", low: "#3fdc3f", stem: "#6be86b" };
const muted: Tone = { ball: "#5a8f5d", top: "#72906f", low: "#5c895c", stem: "#6f906f" };

const Support = ({ x, y, t, stem = true }: { x: number; y: number; t: Tone; stem?: boolean }) => (
  <g transform={`translate(${x} ${y})`}>
    {stem && <rect x="-12" y="36" width="24" height="37" rx="2" fill={t.stem} />}
    {stem && <ellipse cy="71" rx="12" ry="2" fill={t.low} />}
    {stem && <ellipse cy="40" rx="12" ry="4" fill={t.low} />}
    <path d="M-9 14 9 14 43 31-26 30Z" fill={t.top} />
    <path d="M-26 30 43 31 27 44-42 41Z" fill={t.low} />
    <path d="M-26 30-9 14V31Z" fill={t.low} opacity=".4" />
    <circle r="17.500" fill={t.ball} />
  </g>
);
const supports: [number, number, boolean][] = [[199, 294, true], [327, 280, true], [537, 290, true], [152, 332, true], [85, 384, false]];

const AxisCross = ({ x, y }: { x: number; y: number }) => (
  <g transform={`translate(${x} ${y})`}>
    <path d="M0 0 32 2" stroke="#f00" strokeWidth="2" />
    <path d="M30-1 41 2 30 5Z" fill="#b30000" />
    <path d="M0 0V32" stroke="#00f" strokeWidth="2" />
    <path d="M-3 31H3L0 41Z" fill="#0000b0" />
    <path d="M0 0-7 5" stroke="#0c0" strokeWidth="2" />
    <circle cx="-7" cy="5" r="2.500" fill="#090" />
    <rect x="-2" y="-2" width="4" height="4" fill="#900" />
    <g fontSize="10" fontFamily='"Liberation Sans", sans-serif'>
      <text x="46" y="6" fill="#f00">X</text>
      <text x="-15" y="12" fill="#0c0">Y</text>
      <text x="-3" y="53" fill="#00f">Z</text>
    </g>
  </g>
);

const ModelView = () => (
  <main className="min-h-0 flex-1 overflow-hidden border-t-2 border-l-2 border-[#696969] bg-white">
    <svg width="100%" height="100%" className="block" role="img" aria-label="Slab on a steel beam">
      <defs>
        <clipPath id="slab"><path d="M222 258 1480 316 1300 470 34 409Z" /></clipPath>
        <linearGradient id="web" x1="0" y1="0" x2="0" y2="1">
          <stop offset="0" stopColor="#6d6de8" /><stop offset=".5" stopColor="#8080f8" /><stop offset="1" stopColor="#7c7cf4" />
        </linearGradient>
      </defs>
      <g transform="translate(-2 -134)">
        {supports.map(([x, y, s]) => <Support key={x} x={x} y={y} t={bright} stem={s} />)}
        <Support x={1455} y={352} t={bright} />
        <path d="M222 258 1480 316 1440 347 1440 470 34 409Z" fill="#909090" />
        <g clipPath="url(#slab)">
          {supports.map(([x, y, s]) => <Support key={x} x={x} y={y} t={muted} stem={s} />)}
        </g>
        <path d="M86 394 96 384 800 415V489L81 450V395Z" fill="url(#web)" />
        <path d="M97 383 800 415V425L330 403 85 394Z" fill="#42429a" />
        <path d="M81 396 95 397 115 420H81Z" fill="#62887a" />
        <path d="M39 423 53 410.500 115 413.500 115 420 108 426Z" fill="#3fdc3f" />
        <path d="M34 409 53 410.500 116 413 100 398 81 396V371Z" fill="#71906f" opacity=".55" />
        <path d="M81 372V418" stroke="#3b5a3b" />
        <path d="M85 446 800 478V484L76 452Z" fill="#4a4a9a" />
        <path d="M76 451 800 483V488L76 455Z" fill="#7474dc" />
        <path d="M76 453 85 445" stroke="#a06" strokeWidth="1.500" opacity=".5" />
        <path d="M222 258 1480 316M222 258 129 333M1480 316 1462 330" stroke="#1be01b" strokeWidth="1.500" />
        <path d="M129 333 34 409 800 444M81 371 800 404" stroke="#111" strokeWidth="1.100" fill="none" />
        <path d="M90 364V324L800 357M72 348V339L800 372M72 339 90 324M72 362V418L800 451" stroke="#0ff" strokeWidth="1.100" fill="none" />
        <path d="M72 418 90 403V364" stroke="#0ff" strokeWidth="1.100" fill="none" opacity=".35" />
        <g fill="#8c0f0f">
          <rect x="127" y="331" width="4" height="4" /><rect x="79" y="369" width="4" height="4" /><rect x="32" y="407" width="4" height="4" /><rect x="1477" y="314" width="4" height="4" />
        </g>
        <rect x="393" y="384" width="4" height="4" fill="#f00" />
        <path d="M400 391.500 417 393 412.500 398 427.500 413 423 418 408 404 402.500 409Z" fill="#f00" />
        <rect x="440" y="346" width="14" height="15" fill="#fff" />
        <rect x="303" y="422" width="21" height="17" fill="#fff" />
        <g fontFamily='"Liberation Sans", sans-serif'>
          <text x="442" y="357" fontSize="9" fill="#808080">S1</text>
          <text x="305" y="435" fontSize="13" fontWeight="700" fill="#0000d8">M1</text>
          <text x="66" y="360" fontSize="11" fontWeight="700" fill="#008000">1</text>
        </g>
        <AxisCross x={222} y={258} />
        <AxisCross x={57} y={620} />
      </g>
    </svg>
  </main>
);

/* ---------- table panel ---------- */

const Chevron = ({ dir, faint }: { dir: "up" | "down" | "left" | "right"; faint?: boolean }) => (
  <svg width="10" height="10" viewBox="0 0 10 10" fill="none" stroke={faint ? "#bfbfbf" : "#555"} strokeWidth="2" aria-hidden="true">
    <path d={{ up: "M1 7 5 3 9 7", down: "M1 3 5 7 9 3", left: "M7 1 3 5 7 9", right: "M3 1 7 5 3 9" }[dir]} />
  </svg>
);

const Check = ({ label }: { label: string }) => (
  <label className="relative mx-auto block size-[15px]">
    <input
      type="checkbox"
      defaultChecked
      aria-label={label}
      className="peer block size-[15px] appearance-none border border-r-2 border-b-2 border-black bg-white"
    />
    <svg viewBox="0 0 15 15" className="pointer-events-none absolute inset-0 hidden size-[15px] peer-checked:block" aria-hidden="true">
      <path d="M3 8 5.500 10.500 7 9.500 11 3" fill="none" stroke="#000" strokeWidth="1.800" />
    </svg>
  </label>
);

const colHead = "h-[17px] border-t border-l border-r border-b border-t-white border-l-white border-r-[#696969] border-b-[#696969] bg-[#e1e1e1] font-normal";
const cell = "h-[19px] border-r border-b border-[#a0a0a0]";
const subCell = "h-[20px] border-r border-b border-[#a0a0a0] font-normal";
const rowHead = "h-[19px] border border-t-white border-l-white border-r-[#696969] border-b-[#696969] bg-[#e1e1e1] font-normal";
const sub = "relative top-0.5 text-xs leading-none";

const ReleaseTable = () => (
  <table className="w-full table-fixed border-separate border-spacing-0 border-t border-l border-[#696969] text-center leading-4 text-black">
    <colgroup>
      <col className="w-[52px]" /><col className="w-[93px]" /><col className="w-[93px]" /><col className="w-[167px]" /><col className="w-[212px]" /><col />
    </colgroup>
    <thead>
      <tr>
        <th rowSpan={3} className="border-r border-b border-[#696969] bg-[#f0f0f0] pt-3 text-sm leading-4 font-normal whitespace-nowrap">Release<br />Type No</th>
        <th className="h-[17px] border-r border-b border-[#696969] bg-[#0078d7] font-normal text-white">A</th>
        <th className={colHead}>B</th>
        <th className={colHead}>C</th>
        <th className={colHead}>D</th>
        <th className={colHead} aria-label="Unused" />
      </tr>
      <tr>
        <th colSpan={3} className="h-[19px] border-r border-[#a0a0a0] pb-0.5 font-normal">Axial/Shear Release or Spring [kip/ft<span className="relative -top-1 text-xs leading-none">2</span>]</th>
        <th className="h-[19px] border-r border-[#a0a0a0] pb-0.5 font-normal">Moment Release or Spring</th>
        <th className="border-r border-[#a0a0a0]" aria-label="Unused" />
      </tr>
      <tr>
        <th className={subCell}>u<span className={sub}>x</span></th>
        <th className={subCell}>u<span className={sub}>y</span></th>
        <th className={subCell}>u<span className={sub}>z</span></th>
        <th className={subCell}>φ<span className={sub}>x</span> [kipft/rad/ft]</th>
        <th className={subCell} aria-label="Unused" />
      </tr>
    </thead>
    <tbody>
      <tr className="bg-[#ffffc1]">
        <th scope="row" className="h-[19px] border-r border-b border-[#696969] bg-[#0078d7] font-normal text-white">1</th>
        <td className={cell + " outline-1 -outline-offset-2 outline-dotted outline-black"}><Check label="ux released" /></td>
        <td className={cell}><Check label="uy released" /></td>
        <td className={cell}>Fixed if negative vz</td>
        <td className={cell}><Check label="φx released" /></td>
        <td className={cell} />
      </tr>
      {[2, 3, 4, 5].map((n) => (
        <tr key={n} className="bg-white">
          <th scope="row" className={rowHead}>{n}</th>
          <td className={cell} /><td className={cell} /><td className={cell} /><td className={cell} />
          <td className={cell + " bg-[#f0f0f0]"} />
        </tr>
      ))}
    </tbody>
  </table>
);

const tabs = [
  "Cross-Sections", "Member Hinges", "Member Eccentricities", "Member Divisions", "Members", "Member Elastic Foundations",
  "Member Nonlinearities", "Sets of Members", "Intersections", "FE Mesh Refinements", "Nodal Releases", "Line Release Types", "Line Releases",
];

const TabBar = () => (
  <div className="flex h-[19px] items-stretch">
    <div role="tablist" className="flex flex-1 border-t-2 border-[#8a8a8a]">
      {tabs.map((t) => {
        const on = t === "Line Release Types";
        return (
          <button
            key={t}
            type="button"
            role="tab"
            aria-selected={on}
            className={
              "rounded-b border-r border-b border-[#696969] px-1.5 leading-4 whitespace-nowrap first:pl-1 " +
              (on ? "relative -mt-0.5 bg-[#f0f0f0]" : "bg-[#e1e1e1]")
            }
          >
            {t}
          </button>
        );
      })}
    </div>
    <div className="flex">
      {["M2 2V10M9 2V10L4 6Z", "M8 2V10L3 6Z", "M4 2V10L9 6Z", "M10 2V10M3 2V10L8 6Z"].map((d) => (
        <button key={d} type="button" aria-label="Scroll tabs" className="flex w-[18px] items-center justify-center border border-t-white border-l-white border-r-[#696969] border-b-[#696969]">
          <svg width="12" height="12"><path d={d} fill="#000" stroke="#000" strokeWidth=".8" /></svg>
        </button>
      ))}
    </div>
  </div>
);

const TablePanel = () => (
  <section className="shrink-0 border-t-4 border-[#cfd3dc] bg-[#f0f0f0]">
    <div className="bg-linear-to-b from-[#e8edf7] from-50% to-[#cdd2dc]">
      <div className="flex h-[29px] items-center justify-between pr-[7px] pl-1 text-[#4a4d55]">
        <h2 className="text-[13px]">1.25 Line Release Types</h2>
        <div className="flex gap-2 text-[#777]">
          <button type="button" aria-label="Pin"><svg width="10" height="11"><path d="M2.500 1V6M7.500 1V6M2 1.500H8M0 6.500H9M4.500 7V11" stroke="currentColor" strokeWidth="1.300" /></svg></button>
          <button type="button" aria-label="Close panel"><svg width="10" height="10"><path d="M1 1 9 9M9 1 1 9" stroke="currentColor" strokeWidth="1.800" /></svg></button>
        </div>
      </div>
      <div className="flex h-[31px] items-start pt-px pl-[9px]">
        <Tools list="*tri addRow downRow lineRes wave | gLeft gRight | *sync1 *sync2 refresh | gPlus gTimes gDiv | gX | rowX rowIn rowOut | tabY tabB | tabY2" />
      </div>
    </div>
    <div className="border-t-2 border-l-2 border-[#696969] text-[13px]" style={{ fontFamily: '"Liberation Sans", Arial, sans-serif' }}>
      <div className="flex gap-0.5 pr-1 pl-0.5">
        <div className="min-w-0 flex-1"><ReleaseTable /></div>
        <div className="flex w-5 flex-col border-r border-[#a0a0a0]">
          <span className="flex h-5 items-center justify-center"><Chevron dir="up" /></span>
          <span className="mb-px flex-1 bg-[#cdcdcd]" />
          <span className="flex h-5 items-center justify-center"><Chevron dir="down" /></span>
        </div>
      </div>
      <div className="h-[22px]" />
      <TabBar />
    </div>
  </section>
);

/* ---------- status bar ---------- */

const modes: [string, string][] = [
  ["SNAP", "w-[41px]"], ["GRID", "w-[45px] pr-1"], ["CARTES", "w-[64px]"], ["OSNAP", "w-[53px]"], ["GLINES", "w-[54px]"], ["DXF", "w-[33px]"],
];

const StatusBar = () => (
  <footer className="shrink-0">
    <p className="h-[22px] border-t border-[#c8c8c8] bg-[#f0f0f0] pl-0.5 text-sm leading-[22px] text-black">
      Release condition ('Y'es / 'N'o / Spring Constant / F7 to select)
    </p>
    <div className="flex h-7 border-t border-[#9aa0aa] bg-linear-to-b from-[#d5d9e1] via-[#a8adb7] via-40% to-[#b9bec8]">
      <div className="ml-[838px] flex h-6 gap-px text-sm text-[#2d3038]">
        {modes.map(([s, w]) => (
          <button
            key={s}
            type="button"
            className={w + " border text-center leading-[18px] " + (s === "GRID" ? "border-transparent" : "border-[#50555f] border-r-white border-b-white bg-[#b4b9c3]")}
          >
            {s}
          </button>
        ))}
      </div>
      <div className="ml-auto flex w-[332px] pt-1">
        {["w-[88px]", "w-[74px]", "w-[74px]", "w-[78px]"].map((w, i) => (
          <span key={i} className={"h-[22px] border-l border-[#8f949e] " + w} />
        ))}
        <svg width="13" height="13" className="mt-[10px] ml-1" aria-hidden="true">
          <path d="M9 1H11V3H9ZM5 5H7V7H5ZM9 5H11V7H9ZM1 9H3V11H1ZM5 9H7V11H5ZM9 9H11V11H9Z" fill="#6f757f" />
        </svg>
      </div>
    </div>
  </footer>
);

/* ---------- dialog ---------- */

const Band = ({ children }: Kids) => (
  <h3 className="h-[18px] bg-[#dce6f4] pl-[3px] text-[14px] leading-[18px] text-[#1f4470] [clip-path:polygon(0_0,calc(100%-12px)_0,100%_12px,100%_100%,0_100%)]" style={{ fontFamily: '"Liberation Sans", Arial, sans-serif' }}>
    {children}
  </h3>
);

const hit = "border-y border-r border-dotted border-[#ff8728] border-r-white [border-right-style:solid] ";

const ErrorDialog = () => (
  <div role="dialog" aria-label="Calculation Errors and Messages" className="absolute top-[202px] left-[613px] w-[851px] border border-[#6e6e6e] bg-[#f0f0f0] text-black shadow-[0_4px_18px_rgba(0,0,0,0.4)]">
    <div className="flex h-8 items-center justify-between bg-white pr-3.5 pb-px pl-[3px]">
      <h2 className="text-sm">Calculation Errors and Messages</h2>
      <button type="button" aria-label="Close dialog"><svg width="13" height="13"><path d="M.5.5 12.500 12.500M12.500.5.5 12.500" stroke="#000" /></svg></button>
    </div>
    <div className="px-[9px] pt-[9px] pb-[11px] text-[13px]" style={{ fontFamily: 'Roboto, "Noto Sans", sans-serif' }}>
      <section className="border-r border-[#a8a8e4]">
        <Band>Error Messages</Band>
        <div className="mt-0.5 mr-0.5 grid grid-cols-[1fr_20px] border-t border-l border-[#828790] bg-white">
          <div className="h-[317px] overflow-hidden">
            <table className="h-full w-full table-fixed border-separate border-spacing-0">
              <colgroup><col className="w-[135px]" /><col className="w-[63px]" /><col className="w-[90px]" /><col /></colgroup>
              <thead>
                <tr className="h-6">
                  <th className="relative border-r border-[#e5e5e5] pl-1.5 text-left font-normal">
                    Program / Module
                    <svg width="10" height="5" className="absolute top-0 left-[63px]" aria-hidden="true"><path d="M.5 4.500 5 .5 9.500 4.500" fill="none" stroke="#555" /></svg>
                  </th>
                  <th className="border-r border-[#e5e5e5] font-normal">No.</th>
                  <th className="border-r border-[#e5e5e5] font-normal">Error No.</th>
                  <th className="pl-1.5 text-left font-normal">Description</th>
                </tr>
              </thead>
              <tbody>
                <tr className="h-6 bg-[#0078d7] text-white">
                  <td className={hit + "pl-1"}>RFEM64</td>
                  <td className={hit + "text-center"}>LC2</td>
                  <td className={hit + "text-center"}>10134</td>
                  <td className="overflow-hidden border-y border-dotted border-[#ff8728] pl-1 whitespace-nowrap">
                    The stiffness matrix is singular! The model is unstable. Instability found in FE mesh node No. 212, direction X, increment 1
                  </td>
                </tr>
                <tr>
                  <td className="border-r border-black" /><td className="border-r border-black" /><td className="border-r border-black" /><td />
                </tr>
              </tbody>
            </table>
          </div>
          <div className="flex flex-col bg-[#f0f0f0]">
            <span className="flex h-5 items-center justify-center"><Chevron dir="up" /></span>
            <span className="flex-1 bg-[#cdcdcd]" />
            <span className="flex h-[22px] items-center justify-center"><Chevron dir="down" /></span>
          </div>
          <div className="flex h-5 items-stretch bg-[#f0f0f0] pr-0.5">
            <span className="flex w-[21px] items-center justify-center"><Chevron dir="left" /></span>
            <span className="w-[305px] bg-[#cdcdcd]" />
            <span className="ml-auto flex w-[20px] items-center justify-center"><Chevron dir="right" /></span>
          </div>
          <span className="bg-[#f0f0f0]" />
        </div>
      </section>
      <div className="mt-3.5 grid grid-cols-2 gap-2">
        <section className="border-r border-b border-[#a8a8e4]">
          <Band>Calculation Error Description or Message</Band>
          <div className="mt-px mr-0.5 mb-px flex h-[161px] border-t border-l border-[#828790]">
            <p className="flex-1 py-0.5 pr-2 pl-[3px] leading-4 whitespace-nowrap">
              The stiffness matrix is singular! The model is unstable. Instability<br />
              found in FE mesh node No. 212, direction X, increment 1 .The<br />
              model is statically indeterminate. In the add-on module RF-<br />
              Stability, it is possible to determine the shape of buckling in an<br />
              unstable model and to determine the cause of instability.
            </p>
            <div className="flex w-[21px] shrink-0 flex-col items-center justify-between border-l border-white py-1.5">
              <Chevron dir="up" faint /><Chevron dir="down" faint />
            </div>
          </div>
        </section>
        <section aria-label="Preview" className="border border-t-[#dce6f4] border-r-[#a8a8e4] border-b-[#a8a8e4] border-l-[#dce6f4] bg-[#f0f4f9]" />
      </div>
      <hr className="mt-[10px] border-t border-[#a0a0a0]" />
      <div className="mt-3.5 flex h-[26px] items-stretch pl-px">
        <button type="button" aria-label="Help" className="flex w-[29px] items-center justify-center border border-[#adadad] bg-[#e1e1e1]">
          <Ico>
            <path d="M10 1C15 1 19 5 19 9.500 19 14 15 17 11 17L3 19 5 15C-1 10 3 1 10 1Z" fill="#f0f1f5" stroke="#7d828e" strokeWidth="1.500" />
            <Glyph x={6} y={14} s={14} c="#2f478f">?</Glyph>
          </Ico>
        </button>
        <button type="button" aria-label="Show in model" className="ml-[11px] flex w-[30px] items-center justify-center border border-[#adadad] bg-[#e1e1e1]">
          <svg width="16" height="12" viewBox="0 0 16 12" aria-hidden="true"><path d="M.5 6C4 0 12 0 15.500 6 12 12 4 12 .5 6Z" fill="#aab4cf" stroke="#3c4254" /><circle cx="8" cy="6" r="4.500" fill="#5177e0" stroke="#23386f" /><circle cx="8" cy="6" r="1.500" fill="#101c44" /></svg>
        </button>
        <button type="button" className="ml-[303px] w-[86px] border-2 border-[#0078d7] bg-[#e1e1e1]">Close</button>
      </div>
    </div>
  </div>
);

export default function App() {
  return (
    <div className="relative flex h-screen flex-col overflow-hidden" style={{ fontFamily: '"Open Sans", "Noto Sans", sans-serif' }}>
      <TitleBar />
      <MenuBar />
      <ToolBars />
      <ModelView />
      <TablePanel />
      <StatusBar />
      <ErrorDialog />
    </div>
  );
}
